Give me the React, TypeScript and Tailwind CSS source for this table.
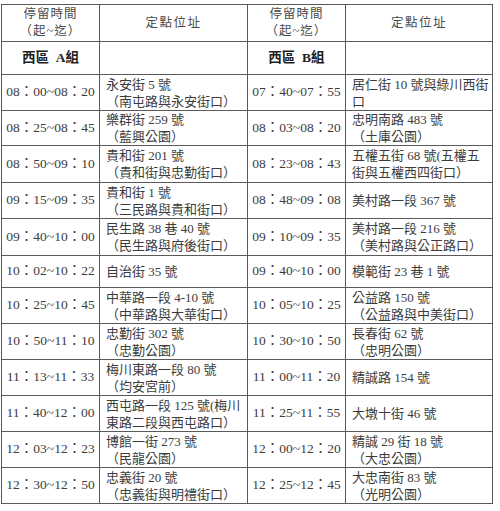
import React from "react";

interface Stop {
  time: string;
  lines: string[];
}

interface Row {
  h: number;
  a: Stop;
  b: Stop;
}

const rows: Row[] = [
  { h: 36, a: { time: "08：00~08：20", lines: ["永安街 5 號", "（南屯路與永安街口）"] }, b: { time: "07：40~07：55", lines: ["居仁街 10 號與綠川西街", "口"] } },
  { h: 35, a: { time: "08：25~08：45", lines: ["樂群街 259 號", "（藍興公園）"] }, b: { time: "08：03~08：20", lines: ["忠明南路 483 號", "（土庫公園）"] } },
  { h: 37, a: { time: "08：50~09：10", lines: ["貴和街 201 號", "（貴和街與忠勤街口）"] }, b: { time: "08：23~08：43", lines: ["五權五街 68 號(五權五", "街與五權西四街口）"] } },
  { h: 36, a: { time: "09：15~09：35", lines: ["貴和街 1 號", "（三民路與貴和街口）"] }, b: { time: "08：48~09：08", lines: ["美村路一段 367 號"] } },
  { h: 37, a: { time: "09：40~10：00", lines: ["民生路 38 巷 40 號", "（民生路與府後街口）"] }, b: { time: "09：10~09：35", lines: ["美村路一段 216 號", "（美村路與公正路口）"] } },
  { h: 32, a: { time: "10：02~10：22", lines: ["自治街 35 號"] }, b: { time: "09：40~10：00", lines: ["模範街 23 巷 1 號"] } },
  { h: 36, a: { time: "10：25~10：45", lines: ["中華路一段 4-10 號", "（中華路與大華街口）"] }, b: { time: "10：05~10：25", lines: ["公益路 150 號", "（公益路與中美街口）"] } },
  { h: 36, a: { time: "10：50~11：10", lines: ["忠勤街 302 號", "（忠勤公園）"] }, b: { time: "10：30~10：50", lines: ["長春街 62 號", "（忠明公園）"] } },
  { h: 36, a: { time: "11：13~11：33", lines: ["梅川東路一段 80 號", "（均安宮前）"] }, b: { time: "11：00~11：20", lines: ["精誠路 154 號"] } },
  { h: 36, a: { time: "11：40~12：00", lines: ["西屯路一段 125 號(梅川", "東路二段與西屯路口）"] }, b: { time: "11：25~11：55", lines: ["大墩十街 46 號"] } },
  { h: 36, a: { time: "12：03~12：23", lines: ["博館一街 273 號", "（民龍公園）"] }, b: { time: "12：00~12：20", lines: ["精誠 29 街 18 號", "（大忠公園）"] } },
  { h: 36, a: { time: "12：30~12：50", lines: ["忠義街 20 號", "（忠義街與明禮街口）"] }, b: { time: "12：25~12：45", lines: ["大忠南街 83 號", "（光明公園）"] } },
];

const font = { fontFamily: '"Liberation Serif", "Noto Sans CJK TC", serif' };

const cell = "border border-[#5a5a5a] p-0 align-middle";

function TimeCell({ time }: { time: string }) {
  return (
    <td className={`${cell} text-center text-[13.5px] text-[#3c3c3c] whitespace-nowrap`}>{time}</td>
  );
}

function AddrCell({ lines }: { lines: string[] }) {
  return (
    <td className={`${cell} pl-[6px] text-left text-[13px] leading-[17px] text-[#3c3c3c] whitespace-nowrap`}>
      {lines.map((l, i) => (
        <div key={i}>{l}</div>
      ))}
    </td>
  );
}

export default function App() {
  return (
    <div
      className="w-[500px] h-[511px] bg-white pt-[4px] pl-[1px] [text-spacing-trim:space-all]"
      style={font}
    >
      <table className="border-collapse table-fixed w-[491px]">
        <colgroup>
          <col className="w-[98px]" />
          <col className="w-[148px]" />
          <col className="w-[98px]" />
          <col className="w-[147px]" />
        </colgroup>
        <tbody>
          <tr className="h-[37px]">
            <td className={`${cell} text-center text-[12.5px] leading-[17px] tracking-[1px] text-[#4a4a4a]`}>
              <div>停留時間</div>
              <div>（起~迄）</div>
            </td>
            <td className={`${cell} text-center text-[12.5px] tracking-[1.5px] text-[#4a4a4a]`}>定點位址</td>
            <td className={`${cell} text-center text-[12.5px] leading-[17px] tracking-[1px] text-[#4a4a4a]`}>
              <div>停留時間</div>
              <div>（起~迄）</div>
            </td>
            <td className={`${cell} text-center text-[12.5px] tracking-[1.5px] text-[#4a4a4a]`}>定點位址</td>
          </tr>
          <tr className="h-[33px]">
            <td className={`${cell} text-center text-[13.5px] font-bold text-[#1e1e1e] whitespace-pre`}>西區  A組</td>
            <td className={cell}></td>
            <td className={`${cell} text-center text-[13.5px] font-bold text-[#1e1e1e] whitespace-pre`}>西區  B組</td>
            <td className={cell}></td>
          </tr>
          {rows.map((r, i) => (
            <tr key={i} style={{ height: r.h }}>
              <TimeCell time={r.a.time} />
              <AddrCell lines={r.a.lines} />
              <TimeCell time={r.b.time} />
              <AddrCell lines={r.b.lines} />
            </tr>
          ))}
        </tbody>
      </table>
    </div>
  );
}
